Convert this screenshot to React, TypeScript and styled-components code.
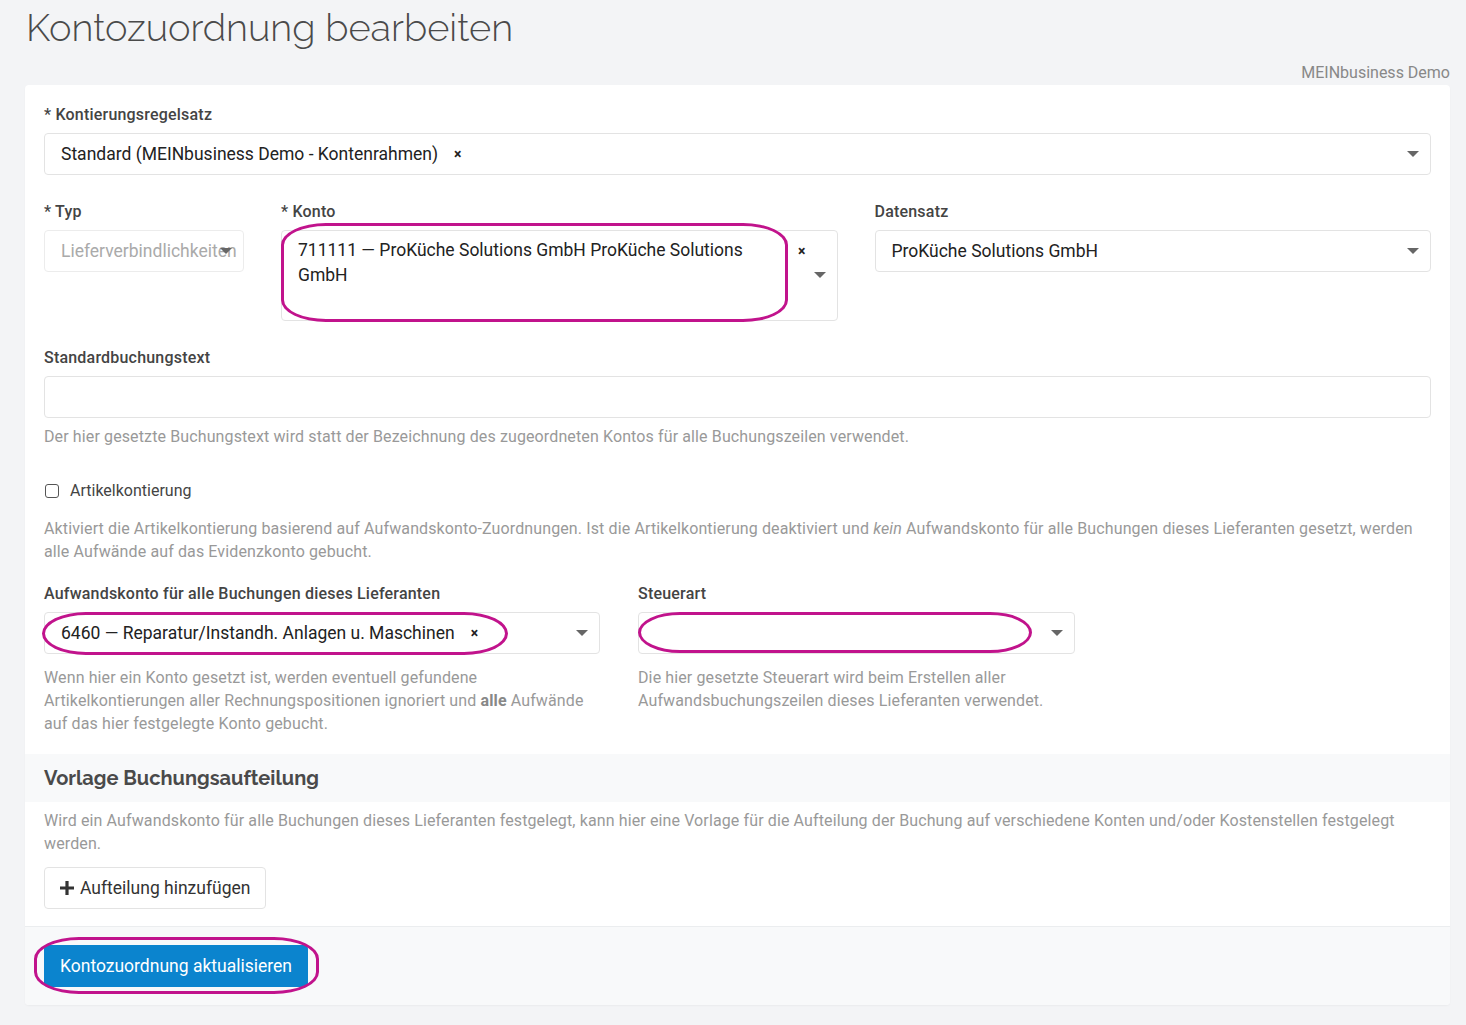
import styled, {createGlobalStyle} from 'styled-components';

const GlobalStyle = createGlobalStyle`
  html, body {
    margin: 0;
    padding: 0;
    background: #f3f4f6;
  }
  body {
    font-family: Roboto, "Liberation Sans", sans-serif;
    color: #444;
  }
  * {
    box-sizing: border-box;
  }
`;

const Page = styled.div`
  width: 1466px;
  padding: 4px 16px 20px 25px;
`;

const Title = styled.h1`
  margin: 0 0 0 1px;
  font-family: Raleway, Lato, "Open Sans", sans-serif;
  font-weight: 300;
  font-size: 38px;
  line-height: 48px;
  color: #4a4a4a;
`;

const Tenant = styled.div`
  text-align: right;
  font-size: 16px;
  line-height: 20px;
  color: #888;
  margin: 11px 0 2px;
`;

const Card = styled.div`
  background: #fff;
  border-radius: 4px;
  box-shadow: 0 1px 2px rgba(0, 0, 0, 0.04);
  overflow: hidden;
`;

const CardBody = styled.div`
  padding: 19px 19px 0 19px;
`;

const Group = styled.div<{mb?: number}>`
  position: relative;
  margin-bottom: ${({mb}) => (mb ?? 26)}px;
`;

const Label = styled.div`
  font-size: 16px;
  font-weight: 500;
  letter-spacing: 0.2px;
  line-height: 22px;
  color: #444;
  margin-bottom: 7px;
`;

const SelectBox = styled.div<{disabled?: boolean; tall?: boolean}>`
  position: relative;
  display: flex;
  align-items: ${({tall}) => (tall ? 'flex-start' : 'center')};
  height: ${({tall}) => (tall ? '91px' : '42px')};
  padding: ${({tall}) => (tall ? '7px 50px 0 16px' : '0 44px 0 16px')};
  border: 1px solid ${({disabled}) => (disabled ? '#ececec' : '#e3e3e3')};
  border-radius: 4px;
  background: #fff;
  font-size: 17.5px;
  line-height: 25px;
  color: ${({disabled}) => (disabled ? '#aaa' : '#222')};
  white-space: ${({tall}) => (tall ? 'normal' : 'nowrap')};
  overflow: hidden;
`;

const Clear = styled.span<{top?: number; right?: number}>`
  font-size: 14px;
  font-weight: 700;
  color: #222;
  margin-left: 16px;
  ${({top, right}) =>
    top !== undefined
      ? `position: absolute; top: ${top}px; right: ${right}px; margin: 0;`
      : ''}
`;

const Caret = styled.span<{top?: number}>`
  position: absolute;
  right: 11px;
  top: ${({top}) => (top !== undefined ? `${top}px` : '50%')};
  margin-top: ${({top}) => (top !== undefined ? '0' : '-3px')};
  width: 0;
  height: 0;
  border-left: 6px solid transparent;
  border-right: 6px solid transparent;
  border-top: 6px solid #666;
`;

const TextInput = styled.div`
  height: 42px;
  border: 1px solid #e3e3e3;
  border-radius: 4px;
  background: #fff;
`;

const Help = styled.p<{mt?: number}>`
  margin: ${({mt}) => mt ?? 7}px 0 0;
  font-size: 16px;
  letter-spacing: 0.12px;
  line-height: 23px;
  color: #999;

  b {
    font-weight: 700;
    color: #888;
  }
`;

const Row = styled.div<{cols: string; gap?: number}>`
  display: grid;
  grid-template-columns: ${({cols}) => cols};
  column-gap: ${({gap}) => gap ?? 37}px;
  align-items: start;
`;

const CheckRow = styled.label`
  display: flex;
  align-items: center;
  gap: 11px;
  font-size: 16px;
  line-height: 22px;
  color: #444;
`;

const Checkbox = styled.span`
  width: 14px;
  height: 14px;
  margin-left: 1px;
  border: 1.5px solid #555;
  border-radius: 3px;
`;

const SectionHead = styled.div`
  background: #f8f9fa;
  height: 48px;
  display: flex;
  align-items: center;
  padding: 0 19px;
  font-family: Raleway, Lato, "Open Sans", sans-serif;
  font-weight: 700;
  font-size: 20px;
  color: #4a4a4a;
`;

const SectionBody = styled.div`
  padding: 7px 19px 17px;
`;

const DefaultButton = styled.button`
  display: inline-flex;
  align-items: center;
  gap: 6px;
  height: 42px;
  margin-top: 12px;
  padding: 0 15px;
  border: 1px solid #e3e3e3;
  border-radius: 4px;
  background: #fff;
  font-family: inherit;
  font-size: 17.5px;
  color: #333;
`;

const Footer = styled.div`
  border-top: 1px solid #ebedef;
  background: #f8f9fa;
  padding: 18px 19px 18px;
`;

const PrimaryButton = styled.button`
  height: 42px;
  padding: 0 16px;
  border: none;
  border-radius: 4px;
  background: #0b84ce;
  color: #fff;
  font-family: inherit;
  font-size: 17.5px;
`;

const Mark = styled.span<{l: number; t: number; w: number; h: number}>`
  position: absolute;
  left: ${({l}) => l}px;
  top: ${({t}) => t}px;
  width: ${({w}) => w}px;
  height: ${({h}) => h}px;
  border: 3px solid #c1138c;
  border-radius: 45px / 22px;
  pointer-events: none;
`;

const Anchor = styled.div`
  position: relative;
`;

const PlusIcon = () => (
  <svg width="14" height="14" viewBox="0 0 14 14">
    <path d="M5.4 0h3.2v5.4H14v3.2H8.6V14H5.4V8.6H0V5.4h5.4z" fill="#333" />
  </svg>
);

export default function App() {
  return (
    <>
      <GlobalStyle />
      <Page>
        <Title>Kontozuordnung bearbeiten</Title>
        <Tenant>MEINbusiness Demo</Tenant>
        <Card>
          <CardBody>
            <Group>
              <Label>* Kontierungsregelsatz</Label>
              <SelectBox>
                Standard (MEINbusiness Demo - Kontenrahmen)
                <Clear>×</Clear>
                <Caret />
              </SelectBox>
            </Group>

            <Row cols="200px 1fr 1fr">
              <Group>
                <Label>* Typ</Label>
                <SelectBox disabled style={{paddingRight: 0}}>
                  Lieferverbindlichkeiten
                  <Caret />
                </SelectBox>
              </Group>
              <Group>
                <Label>* Konto</Label>
                <Anchor>
                  <SelectBox tall>
                    711111 — ProKüche Solutions GmbH ProKüche Solutions GmbH
                    <Clear top={8} right={31}>×</Clear>
                    <Caret top={41} />
                  </SelectBox>
                  <Mark l={0} t={-7} w={507} h={99} />
                </Anchor>
              </Group>
              <Group>
                <Label>Datensatz</Label>
                <SelectBox>
                  ProKüche Solutions GmbH
                  <Caret />
                </SelectBox>
              </Group>
            </Row>

            <Group mb={32}>
              <Label>Standardbuchungstext</Label>
              <TextInput />
              <Help>
                Der hier gesetzte Buchungstext wird statt der Bezeichnung des zugeordneten Kontos
                für alle Buchungszeilen verwendet.
              </Help>
            </Group>

            <Group mb={20}>
              <CheckRow>
                <Checkbox />
                Artikelkontierung
              </CheckRow>
              <Help mt={15}>
                Aktiviert die Artikelkontierung basierend auf Aufwandskonto-Zuordnungen. Ist die
                Artikelkontierung deaktiviert und <i>kein</i> Aufwandskonto für alle Buchungen
                dieses Lieferanten gesetzt, werden alle Aufwände auf das Evidenzkonto gebucht.
              </Help>
            </Group>

            <Row cols="556px 437px" gap={38}>
              <Group mb={19}>
                <Label>Aufwandskonto für alle Buchungen dieses Lieferanten</Label>
                <Anchor>
                  <SelectBox>
                    6460 — Reparatur/Instandh. Anlagen u. Maschinen
                    <Clear>×</Clear>
                    <Caret />
                  </SelectBox>
                  <Mark l={-2} t={0} w={466} h={43} />
                </Anchor>
                <Help mt={12}>
                  Wenn hier ein Konto gesetzt ist, werden eventuell gefundene
                  Artikelkontierungen aller Rechnungspositionen ignoriert und <b>alle</b> Aufwände
                  auf das hier festgelegte Konto gebucht.
                </Help>
              </Group>
              <Group mb={19}>
                <Label>Steuerart</Label>
                <Anchor>
                  <SelectBox>
                    <Caret />
                  </SelectBox>
                  <Mark l={0} t={0} w={394} h={41} />
                </Anchor>
                <Help mt={12}>
                  Die hier gesetzte Steuerart wird beim Erstellen aller
                  Aufwandsbuchungszeilen dieses Lieferanten verwendet.
                </Help>
              </Group>
            </Row>
          </CardBody>

          <SectionHead>Vorlage Buchungsaufteilung</SectionHead>
          <SectionBody>
            <Help mt={0}>
              Wird ein Aufwandskonto für alle Buchungen dieses Lieferanten festgelegt, kann hier
              eine Vorlage für die Aufteilung der Buchung auf verschiedene Konten und/oder
              Kostenstellen festgelegt werden.
            </Help>
            <DefaultButton>
              <PlusIcon />
              Aufteilung hinzufügen
            </DefaultButton>
          </SectionBody>

          <Footer>
            <Anchor>
              <PrimaryButton>Kontozuordnung aktualisieren</PrimaryButton>
              <Mark l={-10} t={-8} w={285} h={57} />
            </Anchor>
          </Footer>
        </Card>
      </Page>
    </>
  );
}
